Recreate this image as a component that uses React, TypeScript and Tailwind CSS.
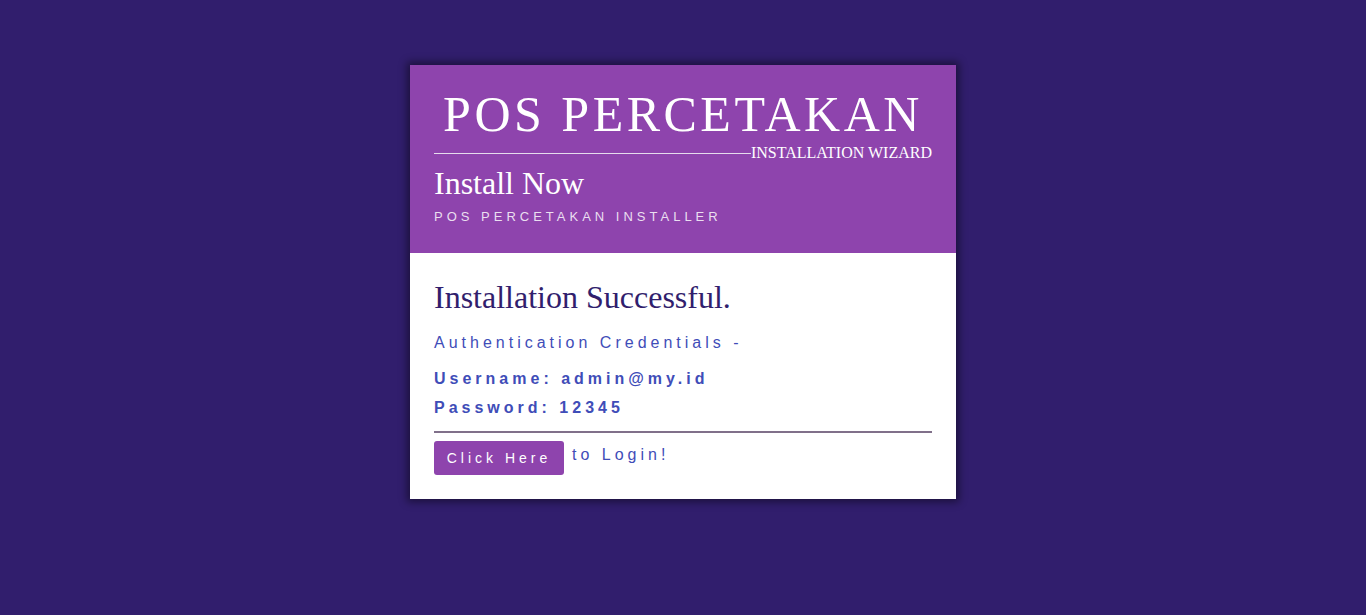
export default function App() {
  const serif = { fontFamily: '"Liberation Serif", "Times New Roman", serif' };
  return (
    <div className="min-h-[615px] w-full bg-[#311e6d] pt-[65px]">
      <div className="mx-auto w-[546px] bg-white shadow-[0_0_8px_3px_rgba(0,0,0,0.45)]">
        <div className="bg-[#8e44ad] px-6 pb-[26px] pt-[19px] text-white">
          <h1 className="whitespace-nowrap text-center text-[50px] leading-[60px] tracking-[3.5px]" style={serif}>
            POS PERCETAKAN
          </h1>
          <div className="flex items-center">
            <div className="h-px flex-1 bg-[#e6dced]" />
            <span className="text-[16px] leading-[18px]" style={serif}>INSTALLATION WIZARD</span>
          </div>
          <h2 className="mt-[1px] text-[32px] leading-[40px]" style={serif}>Install Now</h2>
          <p
            className="mt-[4px] text-[13px] leading-[20px] tracking-[4px] text-[#eadff0]"
            style={{ fontFamily: '"Liberation Sans", Arial, sans-serif' }}
          >
            POS PERCETAKAN INSTALLER
          </p>
        </div>
        <div
          className="px-6 pb-[24px] pt-[24px] text-[#3f4db8]"
          style={{ fontFamily: '"Liberation Sans", Arial, sans-serif' }}
        >
          <h3 className="text-[32px] leading-[40px] text-[#311e6d]" style={serif}>
            Installation Successful.
          </h3>
          <p className="mt-[16px] text-[16px] leading-[20px] tracking-[4px]">Authentication Credentials -</p>
          <p className="mt-[16px] text-[16px] font-bold leading-[20px] tracking-[4px]">Username: admin@my.id</p>
          <p className="mt-[9px] text-[16px] font-bold leading-[20px] tracking-[4px]">Password: 12345</p>
          <hr className="mt-[13px] border-t-2 border-[#80708a]" />
          <div className="mt-[8px] flex items-start">
            <button
              className="h-[34px] w-[130px] rounded-[3px] bg-[#8e44ad] text-[14px] tracking-[4px] text-white"
              type="button"
            >
              Click Here
            </button>
            <span className="ml-[8px] mt-[3px] text-[16px] leading-[22px] tracking-[4px]">to Login!</span>
          </div>
        </div>
      </div>
    </div>
  );
}
